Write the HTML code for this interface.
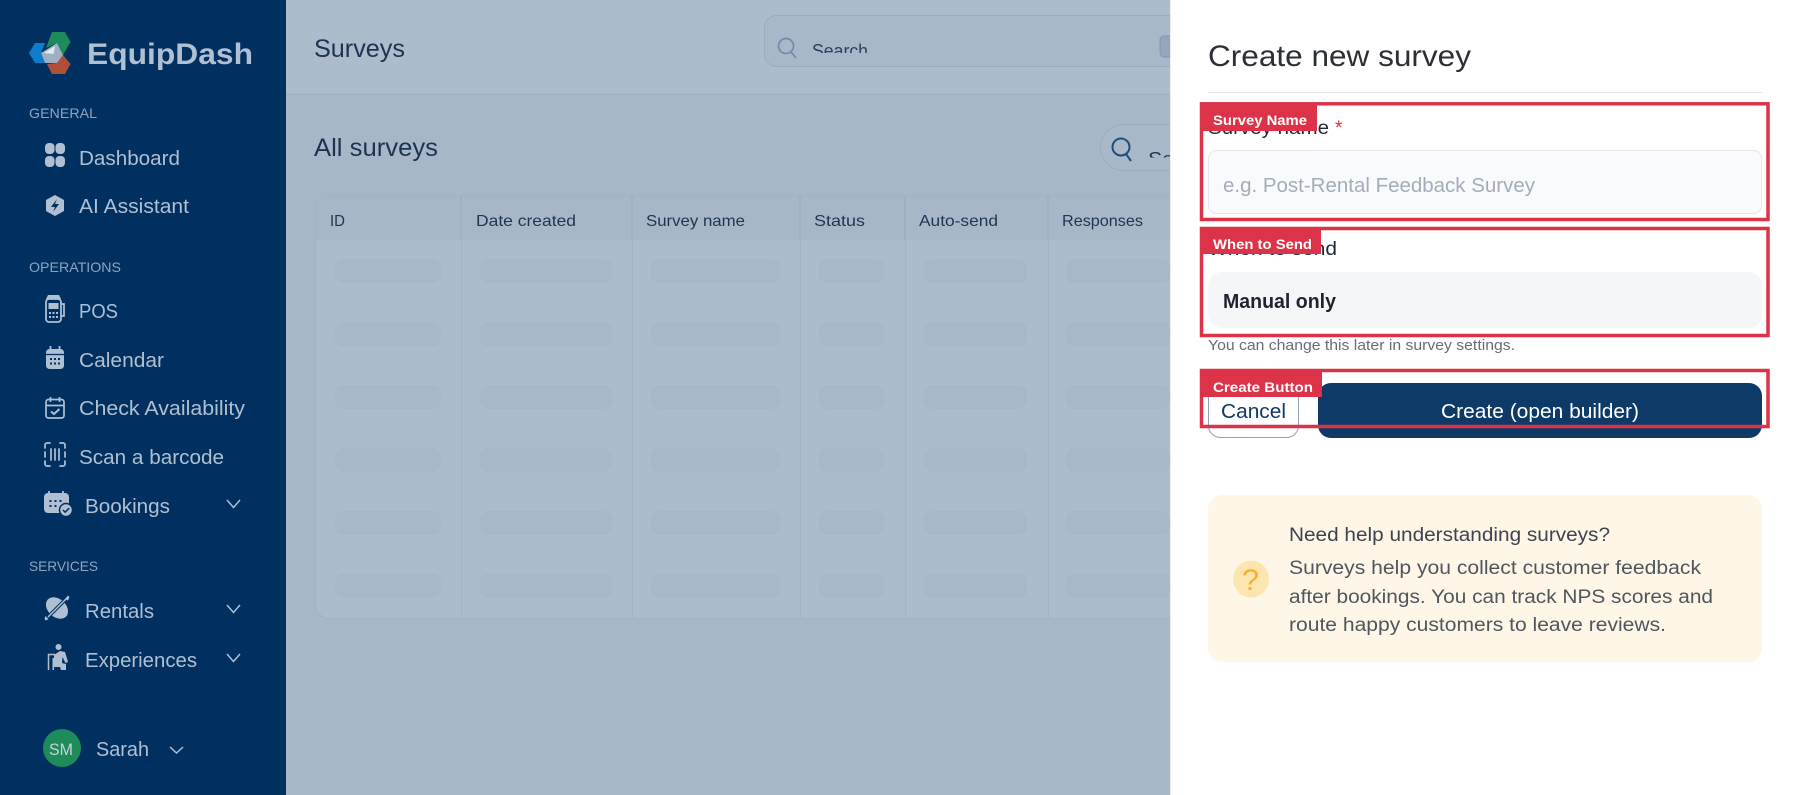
<!DOCTYPE html>
<html lang="en"><head><meta charset="utf-8"><title>Surveys</title>
<style>
html,body{margin:0;padding:0;width:1800px;height:795px;overflow:hidden;background:#a7b7c8}
svg{display:block}
text{font-family:"Liberation Sans",sans-serif}
.nav{font-size:20px;fill:#b0bfd2}
.sec{font-size:14px;fill:#8fa3bc}
.th{font-size:16px;fill:#1f3552}
.lab{font-size:14px;font-weight:700;fill:#fff}
.skel{fill:#a8b8c9}
</style></head><body>
<svg width="1800" height="795" viewBox="0 0 1800 795" xmlns="http://www.w3.org/2000/svg">
<defs>
<clipPath id="c1"><rect x="800" y="30" width="100" height="23"/></clipPath>
<clipPath id="c2"><rect x="1140" y="140" width="30" height="17.5"/></clipPath>
</defs>

<!-- main -->
<rect x="286" width="884" height="795" fill="#a7b7c8"/>
<rect x="286" width="884" height="94" fill="#adbccd"/>
<rect x="286" y="94" width="884" height="1" fill="#9fb0c3"/>
<text x="314" y="57" font-size="25" fill="#1d3350" textLength="91" lengthAdjust="spacingAndGlyphs">Surveys</text>
<rect x="764.5" y="15.5" width="430" height="51" rx="12" fill="#a8b8c9" stroke="#9badc1"/>
<circle cx="786" cy="46" r="7.5" fill="none" stroke="#6e8cab" stroke-width="1.7"/><path d="M791 52l5 6" stroke="#6e8cab" stroke-width="1.7" fill="none"/>
<text x="812" y="57" font-size="18" fill="#2c415c" textLength="56" lengthAdjust="spacingAndGlyphs" clip-path="url(#c1)">Search</text>
<rect x="1160" y="36" width="20" height="21" rx="4" fill="#93a6bc" stroke="#8397ae"/>

<text x="314" y="156" font-size="25" fill="#1d3350" textLength="124" lengthAdjust="spacingAndGlyphs">All surveys</text>
<rect x="1100.5" y="124.5" width="120" height="46" rx="23" fill="#a8b8c9" stroke="#9badc1"/>
<circle cx="1121" cy="147" r="8.5" fill="none" stroke="#1c4d80" stroke-width="2"/><path d="M1126 154l5 7" stroke="#1c4d80" stroke-width="2" fill="none"/>
<text x="1148" y="165" font-size="18" fill="#1f3552" textLength="26" lengthAdjust="spacingAndGlyphs" clip-path="url(#c2)">Se</text>

<!-- table -->
<rect x="315.5" y="195.5" width="900" height="423" rx="14" fill="#adbccd" stroke="#a1b2c4"/>
<path d="M316 240V209.5A14 14 0 0 1 330 196H1170V240Z" fill="#a7b7c8"/>
<g fill="#9fb0c3">
<rect x="460" y="196" width="2" height="44"/><rect x="631" y="196" width="2" height="44"/><rect x="799" y="196" width="2" height="44"/><rect x="904" y="196" width="2" height="44"/><rect x="1047" y="196" width="2" height="44"/>
</g>
<g fill="#a3b3c5">
<rect x="461" y="240" width="1" height="378"/><rect x="632" y="240" width="1" height="378"/><rect x="800" y="240" width="1" height="378"/><rect x="905" y="240" width="1" height="378"/><rect x="1048" y="240" width="1" height="378"/>
</g>
<text class="th" x="330" y="226" textLength="15" lengthAdjust="spacingAndGlyphs">ID</text>
<text class="th" x="476" y="226" textLength="100" lengthAdjust="spacingAndGlyphs">Date created</text>
<text class="th" x="646" y="226" textLength="99" lengthAdjust="spacingAndGlyphs">Survey name</text>
<text class="th" x="814" y="226" textLength="51" lengthAdjust="spacingAndGlyphs">Status</text>
<text class="th" x="919" y="226" textLength="79" lengthAdjust="spacingAndGlyphs">Auto-send</text>
<text class="th" x="1062" y="226" textLength="81" lengthAdjust="spacingAndGlyphs">Responses</text>
<g class="skel">
<rect x="335" y="259" width="106" height="24" rx="8"/><rect x="480" y="259" width="132" height="24" rx="8"/><rect x="651" y="259" width="129" height="24" rx="8"/><rect x="819" y="259" width="65" height="24" rx="8"/><rect x="924" y="259" width="103" height="24" rx="8"/><rect x="1066" y="259" width="104" height="24" rx="8"/>
<rect x="335" y="322" width="106" height="24" rx="8"/><rect x="480" y="322" width="132" height="24" rx="8"/><rect x="651" y="322" width="129" height="24" rx="8"/><rect x="819" y="322" width="65" height="24" rx="8"/><rect x="924" y="322" width="103" height="24" rx="8"/><rect x="1066" y="322" width="104" height="24" rx="8"/>
<rect x="335" y="385" width="106" height="24" rx="8"/><rect x="480" y="385" width="132" height="24" rx="8"/><rect x="651" y="385" width="129" height="24" rx="8"/><rect x="819" y="385" width="65" height="24" rx="8"/><rect x="924" y="385" width="103" height="24" rx="8"/><rect x="1066" y="385" width="104" height="24" rx="8"/>
<rect x="335" y="448" width="106" height="24" rx="8"/><rect x="480" y="448" width="132" height="24" rx="8"/><rect x="651" y="448" width="129" height="24" rx="8"/><rect x="819" y="448" width="65" height="24" rx="8"/><rect x="924" y="448" width="103" height="24" rx="8"/><rect x="1066" y="448" width="104" height="24" rx="8"/>
<rect x="335" y="511" width="106" height="24" rx="8"/><rect x="480" y="511" width="132" height="24" rx="8"/><rect x="651" y="511" width="129" height="24" rx="8"/><rect x="819" y="511" width="65" height="24" rx="8"/><rect x="924" y="511" width="103" height="24" rx="8"/><rect x="1066" y="511" width="104" height="24" rx="8"/>
<rect x="335" y="574" width="106" height="24" rx="8"/><rect x="480" y="574" width="132" height="24" rx="8"/><rect x="651" y="574" width="129" height="24" rx="8"/><rect x="819" y="574" width="65" height="24" rx="8"/><rect x="924" y="574" width="103" height="24" rx="8"/><rect x="1066" y="574" width="104" height="24" rx="8"/>
</g>

<!-- sidebar -->
<rect width="286" height="795" fill="#003060"/>
<!-- logo -->
<path d="M52 32H65L70.500 42L63 55L57 43L46 48Z" fill="#1f8a5a"/>
<path d="M35 43H45L41 53L45 63H35L29 53Z" fill="#0e7ccb"/>
<path d="M63 55L70.500 64L65 74H52L47 64L57 63Z" fill="#ae5035"/>
<path d="M41 53L57 43L63 55L57 63H45Z" fill="#9fb0c5"/>
<path d="M44 53L55 46L53.500 54Z" fill="#e6ebf1"/>
<text x="87" y="64" font-size="30" font-weight="700" fill="#b0bfd2" textLength="166" lengthAdjust="spacingAndGlyphs">EquipDash</text>

<text class="sec" x="29" y="118" textLength="68" lengthAdjust="spacingAndGlyphs">GENERAL</text>
<text class="sec" x="29" y="272" textLength="92" lengthAdjust="spacingAndGlyphs">OPERATIONS</text>
<text class="sec" x="29" y="571" textLength="69" lengthAdjust="spacingAndGlyphs">SERVICES</text>

<text class="nav" x="79" y="165" textLength="101" lengthAdjust="spacingAndGlyphs">Dashboard</text>
<text class="nav" x="79" y="213" textLength="110" lengthAdjust="spacingAndGlyphs">AI Assistant</text>
<text class="nav" x="79" y="318" textLength="39" lengthAdjust="spacingAndGlyphs">POS</text>
<text class="nav" x="79" y="367" textLength="85" lengthAdjust="spacingAndGlyphs">Calendar</text>
<text class="nav" x="79" y="415" textLength="166" lengthAdjust="spacingAndGlyphs">Check Availability</text>
<text class="nav" x="79" y="464" textLength="145" lengthAdjust="spacingAndGlyphs">Scan a barcode</text>
<text class="nav" x="85" y="513" textLength="85" lengthAdjust="spacingAndGlyphs">Bookings</text>
<text class="nav" x="85" y="618" textLength="69" lengthAdjust="spacingAndGlyphs">Rentals</text>
<text class="nav" x="85" y="667" textLength="112" lengthAdjust="spacingAndGlyphs">Experiences</text>
<text class="nav" x="96" y="756" textLength="53" lengthAdjust="spacingAndGlyphs">Sarah</text>

<!-- dashboard icon -->
<g fill="#b0bfd2"><rect x="45" y="143" width="9.500" height="11" rx="4"/><rect x="55.500" y="143" width="9.500" height="11" rx="4"/><rect x="45" y="156" width="9.500" height="11" rx="4"/><rect x="55.500" y="156" width="9.500" height="11" rx="4"/></g>
<!-- AI -->
<path d="M55 195L64 200V211L55 216L46 211V200Z" fill="#b0bfd2"/>
<path d="M57 199L51 207H55L53 212L59 204H55Z" fill="#003060"/>
<!-- POS -->
<g fill="none" stroke="#b0bfd2" stroke-width="1.800"><rect x="46" y="299" width="15" height="23" rx="3"/><path d="M61 304h3v12h-3"/></g>
<path d="M48 295h11l2 4H46Z" fill="#b0bfd2"/><rect x="48.500" y="303" width="10" height="6" fill="#b0bfd2"/>
<g fill="#b0bfd2"><rect x="49" y="312" width="2" height="2"/><rect x="52.500" y="312" width="2" height="2"/><rect x="56" y="312" width="2" height="2"/><rect x="49" y="316" width="2" height="2"/><rect x="52.500" y="316" width="2" height="2"/><rect x="56" y="316" width="2" height="2"/></g>
<!-- Calendar -->
<rect x="46" y="349" width="18" height="20" rx="3.500" fill="#b0bfd2"/>
<path d="M46 354.500H64" stroke="#003060" stroke-width="1.300"/>
<path d="M50.500 346v5M59.500 346v5" stroke="#b0bfd2" stroke-width="1.800"/>
<g fill="#003060"><rect x="50" y="358" width="2" height="2"/><rect x="54" y="358" width="2" height="2"/><rect x="58" y="358" width="2" height="2"/><rect x="50" y="362.500" width="2" height="2"/><rect x="54" y="362.500" width="2" height="2"/><rect x="58" y="362.500" width="2" height="2"/></g>
<!-- Check availability -->
<g fill="none" stroke="#b0bfd2" stroke-width="1.700"><rect x="46" y="399.500" width="18" height="18.500" rx="2.500"/><path d="M46 405.500H64M50.500 397v5M59.500 397v5"/><path d="M51 411.500l3 2.500l5.500-5" stroke-width="2"/></g>
<!-- Scan -->
<g fill="none" stroke="#b0bfd2" stroke-width="1.700" stroke-linecap="round"><path d="M50 443h-3a2 2 0 0 0-2 2v3M60 443h3a2 2 0 0 1 2 2v3M50 466h-3a2 2 0 0 1-2-2v-3M60 466h3a2 2 0 0 0 2-2v-3M45 452v5M65 452v5"/><path d="M51 449v11M55 449v11M59 449v11"/></g>
<!-- Bookings -->
<rect x="44" y="493" width="25" height="20" rx="4" fill="#b0bfd2"/>
<path d="M49 491v4M63 491v4" stroke="#b0bfd2" stroke-width="1.800"/>
<g fill="#003060"><rect x="49.500" y="500" width="2" height="2"/><rect x="54.500" y="500" width="2" height="2"/><rect x="59.500" y="500" width="2" height="2"/><rect x="49.500" y="505" width="2" height="2"/><rect x="54.500" y="505" width="2" height="2"/></g>
<circle cx="66" cy="510" r="6.500" fill="#b0bfd2" stroke="#003060" stroke-width="1.500"/>
<path d="M63 510l2.200 2.200 4-4" fill="none" stroke="#003060" stroke-width="1.500"/>
<path d="M227 500l6.500 7.500l6.500-7.500M227 605l6.500 7.500l6.500-7.500M227 654l6.500 7.500l6.500-7.500" fill="none" stroke="#b0bfd2" stroke-width="1.500"/>
<!-- Rentals -->
<ellipse cx="57" cy="608" rx="12.500" ry="9" fill="#b0bfd2" transform="rotate(42 57 608)"/>
<path d="M47 618L67 598" stroke="#003060" stroke-width="3.500"/>
<path d="M48 617L66 599" stroke="#b0bfd2" stroke-width="1.500"/>
<path d="M45.500 616l3 3-2.500 1.500-1.500-1.500zM65 599l3-3.500 1.500 1.500-1.500 3.500z" fill="#b0bfd2"/>
<!-- Experiences -->
<circle cx="58.500" cy="647" r="3" fill="#b0bfd2"/>
<path d="M48.500 670V654.500H55" fill="none" stroke="#b0bfd2" stroke-width="1.500"/>
<path d="M54 655L60 651L65 652L68 662L65.500 663L62.500 657L62 663L66 664L66 670L61 670L60 667L54 667L54 670L52.500 670V658L54 658Z" fill="#b0bfd2"/>
<!-- avatar -->
<circle cx="62" cy="748" r="19" fill="#1f8a5a"/>
<text x="49" y="755" font-size="17" fill="#c7d3de" textLength="24" lengthAdjust="spacingAndGlyphs">SM</text>
<path d="M170 747l6.500 6l6.500-6" fill="none" stroke="#b0bfd2" stroke-width="1.500"/>

<!-- panel -->
<rect x="1170" width="630" height="795" fill="#fff"/>
<rect x="1170" width="1" height="795" fill="#eceef1"/>
<text x="1208" y="66" font-size="30" fill="#2c2f36" textLength="263" lengthAdjust="spacingAndGlyphs">Create new survey</text>
<rect x="1208" y="92" width="554" height="1" fill="#dfe2e8"/>

<text x="1208" y="134" font-size="19" fill="#1f2937" textLength="121" lengthAdjust="spacingAndGlyphs">Survey name</text>
<text x="1335" y="134" font-size="19" fill="#dc2f45">*</text>
<rect x="1208.500" y="150.500" width="553" height="63" rx="8" fill="#f9fafb" stroke="#e5e7eb"/>
<text x="1223" y="192" font-size="20" fill="#a3adb9" textLength="312" lengthAdjust="spacingAndGlyphs">e.g. Post-Rental Feedback Survey</text>

<text x="1208" y="255" font-size="19" fill="#1f2937" textLength="129" lengthAdjust="spacingAndGlyphs">When to send</text>
<rect x="1208" y="272" width="554" height="56" rx="14" fill="#f5f6f8"/>
<text x="1223" y="308" font-size="20" font-weight="700" fill="#1f2530" textLength="113" lengthAdjust="spacingAndGlyphs">Manual only</text>
<text x="1208" y="350" font-size="15" fill="#666d78" textLength="307" lengthAdjust="spacingAndGlyphs">You can change this later in survey settings.</text>

<rect x="1208.500" y="378" width="90" height="59.500" rx="12" fill="#fff" stroke="#8ea2bc"/>
<text x="1221" y="418" font-size="20" fill="#0d3a66" textLength="65" lengthAdjust="spacingAndGlyphs">Cancel</text>
<rect x="1318" y="383" width="444" height="55" rx="13" fill="#0d3a66"/>
<text x="1441" y="418" font-size="20" fill="#fff" textLength="198" lengthAdjust="spacingAndGlyphs">Create (open builder)</text>

<!-- annotation boxes -->
<g fill="none" stroke="#dc3348" stroke-width="3.500">
<rect x="1201.500" y="103.800" width="566.500" height="115.700"/>
<rect x="1201.500" y="228.500" width="566.500" height="107"/>
<rect x="1201.500" y="370.500" width="566.500" height="56"/>
</g>
<rect x="1200" y="103" width="117" height="28" fill="#dc3348"/>
<rect x="1200" y="227" width="121" height="27" fill="#dc3348"/>
<rect x="1200" y="369" width="122" height="28" fill="#dc3348"/>
<text class="lab" x="1213" y="125" textLength="94" lengthAdjust="spacingAndGlyphs">Survey Name</text>
<text class="lab" x="1213" y="249" textLength="99" lengthAdjust="spacingAndGlyphs">When to Send</text>
<text class="lab" x="1213" y="392" textLength="100" lengthAdjust="spacingAndGlyphs">Create Button</text>

<!-- help box -->
<rect x="1208" y="495" width="554" height="167" rx="14" fill="#fef7e8"/>
<ellipse cx="1251" cy="579" rx="18" ry="18.500" fill="#fde5b0"/>
<text x="1242" y="590" font-size="30" fill="#fbb02d" textLength="17" lengthAdjust="spacingAndGlyphs">?</text>
<text x="1289" y="541" font-size="19" fill="#3d4450" textLength="321" lengthAdjust="spacingAndGlyphs">Need help understanding surveys?</text>
<g font-size="19" fill="#50565f">
<text x="1289" y="574" textLength="412" lengthAdjust="spacingAndGlyphs">Surveys help you collect customer feedback</text>
<text x="1289" y="603" textLength="424" lengthAdjust="spacingAndGlyphs">after bookings. You can track NPS scores and</text>
<text x="1289" y="631" textLength="377" lengthAdjust="spacingAndGlyphs">route happy customers to leave reviews.</text>
</g>
</svg>
</body></html>
